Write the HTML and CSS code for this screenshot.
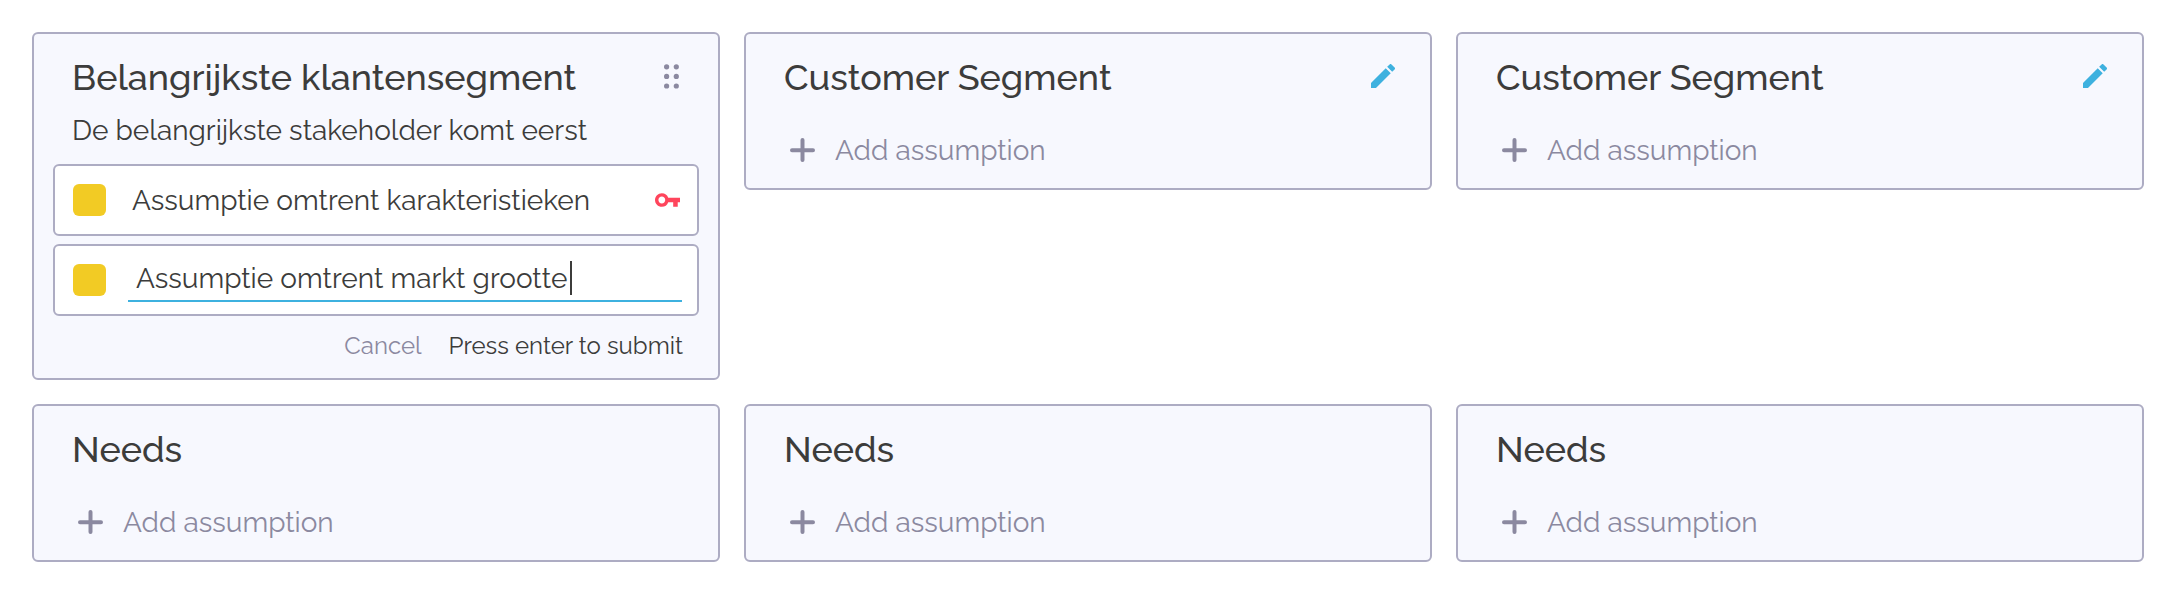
FILE: index.html
```html
<!DOCTYPE html>
<html lang="en">
<head>
    <meta charset="UTF-8">
    <meta name="viewport" content="width=device-width, initial-scale=1.0">
    <title>Customer Segments</title>
    <link rel="stylesheet" href="styles.css">
</head>
<body>
    <!-- Shared icons -->
    <svg class="icon-defs">
        <symbol id="icon-plus" viewBox="0 0 25 24">
            <path d="M2 12.2h21M12.5 2v20" fill="none" stroke="currentColor" stroke-width="4" stroke-linecap="round"/>
        </symbol>
        <symbol id="icon-edit" viewBox="3 3 18 18">
            <path fill="currentColor" d="M3 17.25V21h3.75L17.81 9.94l-3.75-3.75L3 17.25zM20.71 7.04a1 1 0 0 0 0-1.41l-2.34-2.34a1 1 0 0 0-1.41 0l-1.83 1.83 3.75 3.75 1.83-1.83z"/>
        </symbol>
        <symbol id="icon-key" viewBox="1 6 22 12">
            <path fill="currentColor" d="M12.65 10A5.99 5.99 0 0 0 7 6c-3.31 0-6 2.69-6 6s2.69 6 6 6a5.99 5.99 0 0 0 5.65-4H17v4h4v-4h2v-4H12.65zM7 15c-1.65 0-3-1.35-3-3s1.35-3 3-3 3 1.35 3 3-1.35 3-3 3z"/>
        </symbol>
        <symbol id="icon-drag" viewBox="0 0 15 25">
            <g fill="currentColor">
                <circle cx="2.6" cy="2.8" r="2.6"/>
                <circle cx="12.3" cy="2.8" r="2.6"/>
                <circle cx="2.6" cy="12.4" r="2.6"/>
                <circle cx="12.3" cy="12.4" r="2.6"/>
                <circle cx="2.6" cy="22" r="2.6"/>
                <circle cx="12.3" cy="22" r="2.6"/>
            </g>
        </symbol>
    </svg>

    <main class="board">
        <section class="card">
            <div class="card-header">
                <h2 class="card-title">Belangrijkste klantensegment</h2>
                <svg class="drag-icon"><use href="#icon-drag"/></svg>
            </div>
            <p class="card-description">De belangrijkste stakeholder komt eerst</p>
            <div class="assumptions">
                <div class="assumption">
                    <span class="swatch"></span>
                    <span class="assumption-text">Assumptie omtrent karakteristieken</span>
                    <svg class="key-icon"><use href="#icon-key"/></svg>
                </div>
                <div class="assumption">
                    <span class="swatch"></span>
                    <div class="assumption-field">
                        <span class="field-text">Assumptie omtrent markt grootte</span>
                        <span class="caret"></span>
                    </div>
                </div>
            </div>
            <div class="form-actions">
                <span class="cancel">Cancel</span>
                <span class="submit">Press enter to submit</span>
            </div>
        </section>

        <section class="card">
            <div class="card-header">
                <h2 class="card-title">Customer Segment</h2>
                <svg class="edit-icon"><use href="#icon-edit"/></svg>
            </div>
            <div class="add-assumption">
                <svg class="plus-icon"><use href="#icon-plus"/></svg>
                <span class="add-label">Add assumption</span>
            </div>
        </section>

        <section class="card">
            <div class="card-header">
                <h2 class="card-title">Customer Segment</h2>
                <svg class="edit-icon"><use href="#icon-edit"/></svg>
            </div>
            <div class="add-assumption">
                <svg class="plus-icon"><use href="#icon-plus"/></svg>
                <span class="add-label">Add assumption</span>
            </div>
        </section>

        <section class="card">
            <div class="card-header">
                <h2 class="card-title">Needs</h2>
            </div>
            <div class="add-assumption">
                <svg class="plus-icon"><use href="#icon-plus"/></svg>
                <span class="add-label">Add assumption</span>
            </div>
        </section>

        <section class="card">
            <div class="card-header">
                <h2 class="card-title">Needs</h2>
            </div>
            <div class="add-assumption">
                <svg class="plus-icon"><use href="#icon-plus"/></svg>
                <span class="add-label">Add assumption</span>
            </div>
        </section>

        <section class="card">
            <div class="card-header">
                <h2 class="card-title">Needs</h2>
            </div>
            <div class="add-assumption">
                <svg class="plus-icon"><use href="#icon-plus"/></svg>
                <span class="add-label">Add assumption</span>
            </div>
        </section>
    </main>
</body>
</html>
```
FILE: styles.css
```css
* {
    margin: 0;
    padding: 0;
    box-sizing: border-box;
}

body {
    font-family: Raleway, Lato, sans-serif;
    font-size: 28px;
    font-weight: 400;
    color: #3c3c3b;
    background: white;
    white-space: nowrap;
}

.icon-defs {
    display: none;
}

.board {
    display: grid;
    grid-template-columns: repeat(3, 688px);
    gap: 24px;
    align-items: start;
    padding: 32px;
}

.card {
    height: 158px;
    background: #f7f8fe;
    border: 2px solid #adacc3;
    border-radius: 6px;
}

.card:first-child {
    height: 348px;
}

.card-header {
    display: flex;
    justify-content: space-between;
    align-items: center;
    height: 44px;
    margin-top: 20px;
    padding: 0 35px 0 38px;
}

.card-title {
    padding-top: 2px;
    font-size: 36px;
    font-weight: 500;
    line-height: 44px;
}

.drag-icon {
    width: 15px;
    height: 25px;
    margin-right: 4px;
    color: #8b89a0;
}

.edit-icon {
    width: 24px;
    height: 24px;
    color: #3eb1df;
}

.card-description {
    height: 36px;
    margin-top: 15px;
    padding-left: 38px;
    line-height: 36px;
}

.assumptions {
    display: flex;
    flex-direction: column;
    gap: 8px;
    margin: 15px 19px 0;
}

.assumption {
    display: flex;
    align-items: center;
    height: 72px;
    padding: 0 15px 0 18px;
    background: white;
    border: 2px solid #adacc3;
    border-radius: 6px;
}

.swatch {
    flex: none;
    width: 33px;
    height: 32px;
    background: #f2cb24;
    border-radius: 6px;
}

.assumption-text {
    flex: 1;
    margin-left: 26px;
    padding-top: 1px;
    line-height: 36px;
}

.key-icon {
    width: 25px;
    height: 14px;
    margin-right: 2px;
    color: #ff455c;
}

.assumption-field {
    display: flex;
    flex: 1;
    align-items: center;
    height: 46px;
    margin: 0 0 2px 22px;
    padding-left: 8px;
    border-bottom: 2px solid #3eb1df;
}

.caret {
    width: 2px;
    height: 34px;
    margin-left: 3px;
    background: #3c3c3b;
}

.form-actions {
    display: flex;
    justify-content: flex-end;
    gap: 27px;
    margin-top: 14px;
    padding-right: 35px;
    font-size: 24px;
    line-height: 32px;
}

.cancel {
    color: #8b89a0;
}

.add-assumption {
    display: flex;
    align-items: center;
    height: 36px;
    margin-top: 34px;
    padding-left: 44px;
    color: #8b89a0;
}

.plus-icon {
    width: 25px;
    height: 24px;
}

.add-label {
    margin-left: 20px;
    padding-top: 1px;
}
```
